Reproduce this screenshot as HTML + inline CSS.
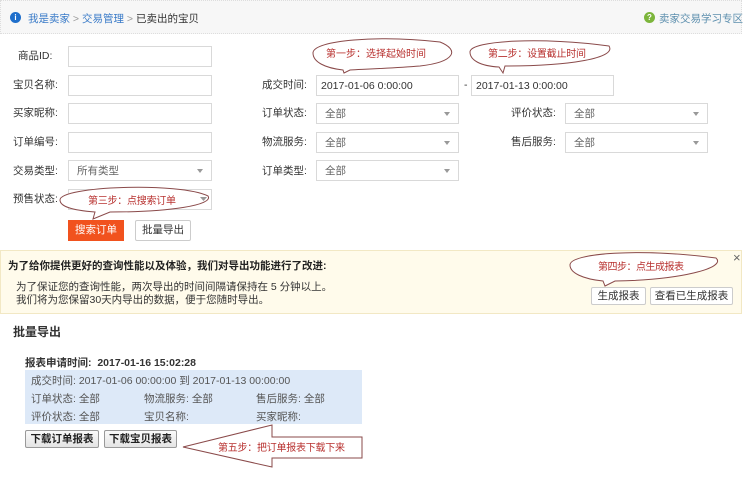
<!DOCTYPE html>
<html><head><meta charset="utf-8"><style>
*{margin:0;padding:0;box-sizing:border-box}
body{width:750px;height:477px;background:#fff;font-family:"Liberation Sans","Noto Sans CJK SC",sans-serif;font-size:10.5px;color:#333;position:relative;overflow:hidden}
.a{position:absolute;white-space:nowrap}
.in{position:absolute;border:1px solid #d9d9d9;background:#fff;height:21px;line-height:20px;padding-left:8px;font-size:10.5px}
.sel{color:#666;padding-left:8px}
.sel:after{content:"";position:absolute;right:8px;top:8px;border-left:3.5px solid transparent;border-right:3.5px solid transparent;border-top:4px solid #999}
.lb{position:absolute;font-size:10.5px;color:#333;line-height:14px}
.btn{position:absolute;border:1px solid #ccc;background:#fff;text-align:center;font-size:10.5px;border-radius:2px}
</style></head><body>
<div class="a" style="left:0;top:0;width:742px;height:34px;background:#f7f7f7;border:1px dotted #ddd"></div>
<div class="a" style="left:10px;top:12px;width:11px;height:11px;border-radius:50%;background:#1f6fcb;color:#fff;font-size:8px;font-weight:bold;text-align:center;line-height:11px">i</div>
<div class="a" style="left:28px;top:11px;font-size:10.5px;color:#3a7bc8">我是卖家 <span style="color:#999">&gt;</span> 交易管理 <span style="color:#999">&gt;</span> <span style="color:#333">已卖出的宝贝</span></div>
<div class="a" style="left:644px;top:12px;width:11px;height:11px;border-radius:50%;background:#7cb53b;color:#fff;font-size:8px;font-weight:bold;text-align:center;line-height:11px">?</div>
<div class="a" style="left:659px;top:11px;font-size:10.5px;color:#5d8fae">卖家交易学习专区</div>

<div class="lb" style="left:18px;top:49px">商品ID:</div>
<div class="in" style="left:68px;top:46px;width:144px"></div>
<div class="lb" style="left:13px;top:78px">宝贝名称:</div>
<div class="in" style="left:68px;top:75px;width:144px"></div>
<div class="lb" style="left:13px;top:106px">买家昵称:</div>
<div class="in" style="left:68px;top:103px;width:144px"></div>
<div class="lb" style="left:13px;top:135px">订单编号:</div>
<div class="in" style="left:68px;top:132px;width:144px"></div>
<div class="lb" style="left:13px;top:164px">交易类型:</div>
<div class="in sel" style="left:68px;top:160px;width:144px">所有类型</div>
<div class="lb" style="left:13px;top:192px">预售状态:</div>
<div class="in sel" style="left:68px;top:189px;width:144px"></div>

<div class="lb" style="left:262px;top:78px">成交时间:</div>
<div class="in" style="left:316px;top:75px;width:143px;color:#333;padding-left:4px">2017-01-06 0:00:00</div>
<div class="lb" style="left:464px;top:78px">-</div>
<div class="in" style="left:471px;top:75px;width:143px;color:#333;padding-left:4px">2017-01-13 0:00:00</div>
<div class="lb" style="left:262px;top:106px">订单状态:</div>
<div class="in sel" style="left:316px;top:103px;width:143px">全部</div>
<div class="lb" style="left:262px;top:135px">物流服务:</div>
<div class="in sel" style="left:316px;top:132px;width:143px">全部</div>
<div class="lb" style="left:262px;top:164px">订单类型:</div>
<div class="in sel" style="left:316px;top:160px;width:143px">全部</div>
<div class="lb" style="left:511px;top:106px">评价状态:</div>
<div class="in sel" style="left:565px;top:103px;width:143px">全部</div>
<div class="lb" style="left:511px;top:135px">售后服务:</div>
<div class="in sel" style="left:565px;top:132px;width:143px">全部</div>

<div class="a" style="left:68px;top:220px;width:56px;height:21px;background:#f1521e;color:#fff;text-align:center;line-height:21px">搜索订单</div>
<div class="btn" style="left:135px;top:220px;width:56px;height:21px;line-height:19px">批量导出</div>

<div class="a" style="left:0;top:250px;width:742px;height:64px;background:#fffbeb;border:1px solid #f2e8c4"></div>
<div class="a" style="left:8px;top:258px;font-weight:bold;color:#222">为了给你提供更好的查询性能以及体验，我们对导出功能进行了改进:</div>
<div class="a" style="left:16px;top:279px;color:#333">为了保证您的查询性能，两次导出的时间间隔请保持在 5 分钟以上。</div>
<div class="a" style="left:16px;top:292px;color:#333">我们将为您保留30天内导出的数据，便于您随时导出。</div>
<div class="a" style="left:733px;top:250px;color:#666;font-size:13px">×</div>
<div class="btn" style="left:591px;top:287px;width:55px;height:18px;line-height:16px">生成报表</div>
<div class="btn" style="left:650px;top:287px;width:83px;height:18px;line-height:16px">查看已生成报表</div>

<div class="a" style="left:13px;top:323px;font-size:12px;font-weight:bold;color:#333">批量导出</div>
<div class="a" style="left:25px;top:355px;font-weight:bold;color:#333">报表申请时间:&nbsp;&nbsp;2017-01-16 15:02:28</div>
<div class="a" style="left:25px;top:370px;width:337px;height:54px;background:#dde9f8"></div>
<div class="a" style="left:31px;top:373px;color:#555">成交时间: 2017-01-06 00:00:00 到 2017-01-13 00:00:00</div>
<div class="a" style="left:31px;top:391px;color:#555">订单状态: 全部</div>
<div class="a" style="left:144px;top:391px;color:#555">物流服务: 全部</div>
<div class="a" style="left:256px;top:391px;color:#555">售后服务: 全部</div>
<div class="a" style="left:31px;top:409px;color:#555">评价状态: 全部</div>
<div class="a" style="left:144px;top:409px;color:#555">宝贝名称:</div>
<div class="a" style="left:256px;top:409px;color:#555">买家昵称:</div>
<div class="btn" style="left:25px;top:430px;width:74px;height:18px;line-height:16px;font-weight:bold;background:linear-gradient(#fafafa,#e4e4e4);border-color:#999;color:#222">下载订单报表</div>
<div class="btn" style="left:104px;top:430px;width:73px;height:18px;line-height:16px;font-weight:bold;background:linear-gradient(#fafafa,#e4e4e4);border-color:#999;color:#222">下载宝贝报表</div>

<svg class="a" style="left:0;top:0" width="750" height="477">
<g fill="#fff" stroke="#8a4a4a" stroke-width="1">
<path d="M313 53 C313 40 380 35 440 42 C460 50 455 62 420 66 C395 68 370 69 350 70 L344 73 L343 70 C325 68 313 62 313 53Z"/>
<path d="M470 52 C470 40 545 37 609 46 C617 58 570 66 505 66 L503 73 L499 67 C480 66 470 60 470 52Z"/>
<path d="M60 200 C60 186 180 182 208 196 C214 205 170 212 110 212 L93 219 L95 212 C70 210 60 206 60 200Z"/>
<path d="M570 265 C570 253 640 248 716 258 C727 268 680 280 615 281 L605 286 L603 281 C583 279 570 273 570 265Z"/>
<polygon points="183,447 272,425 272,437 362,437 362,458 272,458 272,467"/>
</g>
<g font-family="Liberation Sans,Noto Sans CJK SC,sans-serif" font-size="10" fill="#b8312f">
<text x="326" y="57" textLength="100">第一步：选择起始时间</text>
<text x="488" y="57" textLength="98">第二步：设置截止时间</text>
<text x="88" y="204" textLength="88">第三步：点搜索订单</text>
<text x="598" y="270" textLength="86">第四步：点生成报表</text>
<text x="218" y="451" textLength="127">第五步：把订单报表下载下来</text>
</g>
<path d="M200 197 l3.5 4 l3.5 -4z" fill="#999"/>
</svg>
</body></html>
